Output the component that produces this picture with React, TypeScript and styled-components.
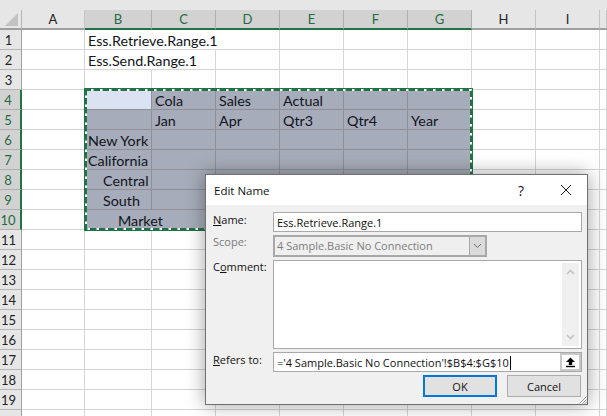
import styled, { createGlobalStyle } from "styled-components";

const GlobalStyle = createGlobalStyle`
  html, body {
    margin: 0;
    padding: 0;
    background: #ffffff;
    overflow: hidden;
  }
`;

const Page = styled.div`
  position: relative;
  width: 607px;
  height: 416px;
  overflow: hidden;
  background: #e6e6e6;
  padding-top: 10px;
  box-sizing: border-box;
`;

const Sheet = styled.div`
  display: grid;
  grid-template-columns: 22px 63px 67px repeat(7, 64px) 7px;
  grid-auto-rows: 20px;
  background: #ffffff;
`;

const Corner = styled.div`
  background: #e6e6e6;
  border-right: 1px solid #b5b5b5;
  border-bottom: 2px solid #9f9f9f;
  box-sizing: border-box;
  display: flex;
  align-items: center;
  justify-content: flex-end;
  padding: 0 3px 0 0;
`;

const ColHead = styled.div<{ $on?: boolean }>`
  box-sizing: border-box;
  display: flex;
  align-items: center;
  justify-content: center;
  font: 13px "Lato", "Open Sans", sans-serif;
  background: ${(p) => (p.$on ? "#d2d2d2" : "#e6e6e6")};
  color: ${(p) => (p.$on ? "#1f6b43" : "#222222")};
  border-right: 1px solid ${(p) => (p.$on ? "#b0b0b0" : "#c4c4c4")};
  border-bottom: 2px solid ${(p) => (p.$on ? "#217346" : "#9f9f9f")};
`;

const RowHead = styled.div<{ $on?: boolean }>`
  box-sizing: border-box;
  display: flex;
  align-items: center;
  justify-content: center;
  padding-right: 4px;
  font: 13px "Lato", "Open Sans", sans-serif;
  background: ${(p) => (p.$on ? "#d2d2d2" : "#e6e6e6")};
  color: ${(p) => (p.$on ? "#1f6b43" : "#222222")};
  border-bottom: 1px solid ${(p) => (p.$on ? "#b0b0b0" : "#b5b5b5")};
  border-right: ${(p) => (p.$on ? "2px solid #217346" : "1px solid #9f9f9f")};
`;

const Cell = styled.div<{ $tone: string; $open?: boolean; $indent: number; $lift?: boolean }>`
  box-sizing: border-box;
  display: flex;
  align-items: center;
  white-space: nowrap;
  min-width: 0;
  padding-top: 1px;
  z-index: ${(p) => (p.$lift ? 1 : 0)};
  font: 14.3px "Lato", "Open Sans", sans-serif;
  color: #10131c;
  padding-left: ${(p) => p.$indent}px;
  background: ${(p) =>
    p.$tone === "first" ? "#dbe2f2" : p.$tone === "sel" ? "#a6acb9" : "#ffffff"};
  border-bottom: 1px solid ${(p) => (p.$tone === "plain" ? "#d4d4d4" : "#8f9097")};
  border-right: 1px solid
    ${(p) => (p.$open ? "transparent" : p.$tone === "plain" ? "#d4d4d4" : "#8f9097")};
`;

const Ants = styled.svg`
  position: absolute;
  left: 84px;
  top: 88px;
  z-index: 2;
`;

const Dialog = styled.div`
  position: absolute;
  z-index: 3;
  left: 205px;
  top: 174px;
  width: 383px;
  height: 231px;
  box-sizing: border-box;
  border: 1px solid #6f6f6f;
  background: #f0f0f0;
  box-shadow: 0 0 18px rgba(0, 0, 0, 0.38);
  font: 11px "Open Sans", "Noto Sans", sans-serif;
  color: #111111;
`;

const TitleBar = styled.div`
  height: 30px;
  background: #ffffff;
  display: flex;
  align-items: center;
  padding: 0 15px 0 8px;
  font-size: 11.5px;
`;

const Title = styled.div`
  flex: 1;
`;

const Help = styled.div`
  width: 46px;
  margin-right: 16px;
  text-align: center;
  font-size: 14px;
`;

const Form = styled.div`
  display: grid;
  grid-template-columns: 60px 309px;
  grid-template-rows: 20px 22px 89px 20px;
  row-gap: 3px;
  padding: 7px 0 0 7px;
`;

const Label = styled.div<{ $off?: boolean; $up?: boolean }>`
  line-height: 15px;
  margin-top: ${(p) => (p.$up ? "-1px" : "0")};
  color: ${(p) => (p.$off ? "#7a7a7a" : "#111111")};
  white-space: nowrap;
`;

const Field = styled.div<{ $off?: boolean }>`
  box-sizing: border-box;
  display: flex;
  align-items: center;
  padding-left: 3px;
  background: ${(p) => (p.$off ? "#efefef" : "#ffffff")};
  border: ${(p) => (p.$off ? "2px" : "1px")} solid #a8a8a8;
  color: ${(p) => (p.$off ? "#7d7d7d" : "#111111")};
  white-space: nowrap;
  overflow: hidden;
`;

const ScopeField = styled(Field)`
  width: 214px;
  padding-right: 0;
  padding-left: 2px;
`;

const ScopeText = styled.div`
  flex: 1;
  padding-bottom: 1px;
`;

const DropButton = styled.div`
  width: 15px;
  height: 100%;
  background: #dadada;
  border-left: 1px solid #a8a8a8;
  display: flex;
  align-items: center;
  justify-content: center;
`;

const CommentBox = styled.div`
  box-sizing: border-box;
  background: #ffffff;
  border: 1px solid #a8a8a8;
  display: flex;
  justify-content: flex-end;
  padding: 2px;
`;

const ScrollTrack = styled.div`
  width: 17px;
  background: #f0f0f0;
  display: flex;
  flex-direction: column;
  justify-content: space-between;
  align-items: center;
  padding: 6px 0;
`;

const RefField = styled(Field)`
  justify-content: space-between;
  padding-right: 0;
`;

const Caret = styled.span`
  display: inline-block;
  width: 1px;
  height: 14px;
  margin-left: 1px;
  vertical-align: -3px;
  background: #000000;
`;

const PickButton = styled.div`
  box-sizing: border-box;
  width: 21px;
  height: 100%;
  background: #fdfdfd;
  border: 2px solid #c8c8c8;
  display: flex;
  align-items: center;
  justify-content: center;
`;

const Buttons = styled.div`
  display: flex;
  justify-content: flex-end;
  gap: 10px;
  padding: 3px 6px 0 0;
`;

const Button = styled.div<{ $main?: boolean }>`
  box-sizing: border-box;
  width: 74px;
  height: 22px;
  display: flex;
  align-items: center;
  justify-content: center;
  background: #e1e1e1;
  border: ${(p) => (p.$main ? "2px solid #0078d7" : "1px solid #adadad")};
`;

const Grip = styled.svg`
  position: absolute;
  right: 0;
  bottom: 0;
`;

const columns = ["A", "B", "C", "D", "E", "F", "G", "H", "I", ""];
const selectedCols = "BCDEFG";

type Entry = { text: string; indent?: number };

const content: Record<string, Entry> = {
  "1B": { text: "Ess.Retrieve.Range.1" },
  "2B": { text: "Ess.Send.Range.1" },
  "4C": { text: "Cola" },
  "4D": { text: "Sales" },
  "4E": { text: "Actual" },
  "5C": { text: "Jan" },
  "5D": { text: "Apr" },
  "5E": { text: "Qtr3" },
  "5F": { text: "Qtr4" },
  "5G": { text: "Year" },
  "6B": { text: "New York" },
  "7B": { text: "California" },
  "8B": { text: "Central", indent: 18 },
  "9B": { text: "South", indent: 18 },
  "10B": { text: "Market", indent: 33 },
};

const openCells = ["1B", "1C", "2B", "10B"];

const rows = Array.from({ length: 20 }, (_, i) => i + 1);

const App = () => {
  return (
    <Page>
      <GlobalStyle />
      <Sheet>
        <Corner>
          <svg width="13" height="13" viewBox="0 0 13 13">
            <path d="M13 0V13H0Z" fill="#c2c2c2" />
          </svg>
        </Corner>
        {columns.map((col, i) => (
          <ColHead key={i} $on={col !== "" && selectedCols.includes(col)}>
            {col}
          </ColHead>
        ))}
        {rows.map((row) => {
          const rowOn = row >= 4 && row <= 10;
          return [
            <RowHead key={row} $on={rowOn}>
              {row < 20 ? row : ""}
            </RowHead>,
            ...columns.map((col, i) => {
              const id = `${row}${col}`;
              const inRange = rowOn && col !== "" && selectedCols.includes(col);
              const tone = id === "4B" ? "first" : inRange ? "sel" : "plain";
              const entry = content[id];
              return (
                <Cell
                  key={`${row}-${i}`}
                  $tone={tone}
                  $open={openCells.includes(id)}
                  $indent={entry?.indent ?? 3}
                  $lift={!!entry}
                >
                  {entry?.text}
                </Cell>
              );
            }),
          ];
        })}
      </Sheet>

      <Ants width="389" height="143">
        <rect x="1.5" y="1.5" width="386" height="140" fill="none" stroke="#217346" strokeWidth="3" />
        <rect
          x="2"
          y="2"
          width="385"
          height="139"
          fill="none"
          stroke="#ffffff"
          strokeWidth="2"
          strokeDasharray="2.5 6.5"
          strokeDashoffset="-5"
        />
      </Ants>

      <Dialog>
        <TitleBar>
          <Title>Edit Name</Title>
          <Help>?</Help>
          <svg width="12" height="12" viewBox="0 0 12 12">
            <path d="M1 1L11 11M11 1L1 11" stroke="#1a1a1a" strokeWidth="1" fill="none" />
          </svg>
        </TitleBar>
        <Form>
          <Label>
            <u>N</u>ame:
          </Label>
          <Field>Ess.Retrieve.Range.1</Field>
          <Label $off $up>
            Scope:
          </Label>
          <ScopeField $off>
            <ScopeText>4 Sample.Basic No Connection</ScopeText>
            <DropButton>
              <svg width="9" height="6" viewBox="0 0 9 6">
                <path d="M1 1L4.5 4.5L8 1" stroke="#6a6a6a" strokeWidth="1" fill="none" />
              </svg>
            </DropButton>
          </ScopeField>
          <Label $up>
            C<u>o</u>mment:
          </Label>
          <CommentBox>
            <ScrollTrack>
              <svg width="9" height="6" viewBox="0 0 9 6">
                <path d="M1 5L4.5 1.5L8 5" stroke="#c4c4c4" strokeWidth="1.6" fill="none" />
              </svg>
              <svg width="9" height="6" viewBox="0 0 9 6">
                <path d="M1 1L4.5 4.5L8 1" stroke="#c4c4c4" strokeWidth="1.6" fill="none" />
              </svg>
            </ScrollTrack>
          </CommentBox>
          <Label>
            <u>R</u>efers to:
          </Label>
          <RefField>
            <div>
              ='4 Sample.Basic No Connection'!$B$4:$G$10
              <Caret />
            </div>
            <PickButton>
              <svg width="11" height="11" viewBox="0 0 11 11">
                <path d="M5.5 0.5L10 5H7.2V8H3.8V5H1Z" fill="#000000" />
                <path d="M1 9.5H10" stroke="#000000" strokeWidth="1.4" />
              </svg>
            </PickButton>
          </RefField>
        </Form>
        <Buttons>
          <Button $main>OK</Button>
          <Button>Cancel</Button>
        </Buttons>
        <Grip width="8" height="8" viewBox="0 0 8 8">
          <path d="M7.5 0.5L0.5 7.5M7.5 3.5L3.5 7.5M7.5 6L6 7.5" stroke="#a0a0a0" strokeWidth="1" />
        </Grip>
      </Dialog>
    </Page>
  );
};

export default App;
